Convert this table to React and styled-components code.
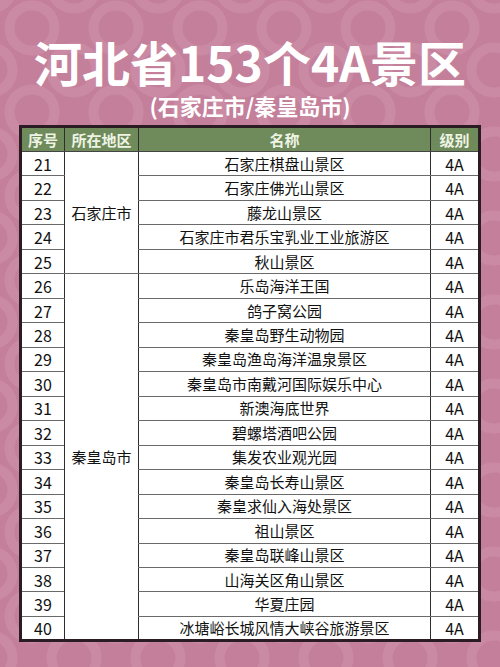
import styled, { createGlobalStyle } from 'styled-components'

const GlobalStyle = createGlobalStyle`
    html, body {
        margin:0;
        padding:0;
    }
    body {
        font-family:"Noto Sans CJK SC", "Noto Sans", sans-serif;
    }
`

const ring = `radial-gradient(circle at center, transparent 17px, rgba(255,235,245,0.1) 18px, rgba(255,235,245,0.1) 27px, transparent 28px)`

const Page = styled.div`
    width:500px;
    height:667px;
    box-sizing:border-box;
    padding-top:33px;
    background-color:#c47f9b;
    background-image:${ring}, ${ring};
    background-size:84px 84px, 84px 84px;
    background-position:-10px -14px, 32px 28px;
    display:flex;
    flex-direction:column;
    align-items:center;
    overflow:hidden;
`

const Title = styled.h1`
    margin:0;
    height:56px;
    font-size:48px;
    line-height:56px;
    font-weight:700;
    color:#fff;
`

const SubTitle = styled.h2`
    margin:4px 0 0 0;
    font-size:22px;
    line-height:24px;
    font-weight:700;
    color:#fff;
`

const Table = styled.table`
    margin-top:8px;
    width:459px;
    border-collapse:collapse;
    border:3px solid #2a1c22;
    background:#fff;
    table-layout:fixed;
`

const HeadCell = styled.th`
    height:23px;
    padding:0;
    background:#6f8a5b;
    color:#eef4e4;
    font-size:15px;
    font-weight:700;
    line-height:23px;
    text-align:center;
    border-left:1.5px solid #2e2e2e;
    border-bottom:1px solid #444;
    width:${props => props.w}px;
`

const Cell = styled.td`
    height:24.47px;
    padding:0;
    box-sizing:border-box;
    color:#111;
    font-size:${props => props.num ? 16 : 15}px;
    line-height:20px;
    text-align:center;
    border-left:1.5px solid #2e2e2e;
    border-bottom:1px solid #6a6a6a;
    white-space:nowrap;
`

const rows = [
    [21, '石家庄棋盘山景区'],
    [22, '石家庄佛光山景区'],
    [23, '藤龙山景区'],
    [24, '石家庄市君乐宝乳业工业旅游区'],
    [25, '秋山景区'],
    [26, '乐岛海洋王国'],
    [27, '鸽子窝公园'],
    [28, '秦皇岛野生动物园'],
    [29, '秦皇岛渔岛海洋温泉景区'],
    [30, '秦皇岛市南戴河国际娱乐中心'],
    [31, '新澳海底世界'],
    [32, '碧螺塔酒吧公园'],
    [33, '集发农业观光园'],
    [34, '秦皇岛长寿山景区'],
    [35, '秦皇求仙入海处景区'],
    [36, '祖山景区'],
    [37, '秦皇岛联峰山景区'],
    [38, '山海关区角山景区'],
    [39, '华夏庄园'],
    [40, '冰塘峪长城风情大峡谷旅游景区'],
]

const App = () => {
    return (
        <Page>
            <GlobalStyle/>
            <Title>河北省153个4A景区</Title>
            <SubTitle>(石家庄市/秦皇岛市)</SubTitle>
            <Table>
                <thead>
                    <tr>
                        <HeadCell w={42}>序号</HeadCell>
                        <HeadCell w={73}>所在地区</HeadCell>
                        <HeadCell w={291}>名称</HeadCell>
                        <HeadCell w={47}>级别</HeadCell>
                    </tr>
                </thead>
                <tbody>
                    {rows.map(([no, name]) => (
                        <tr key={no}>
                            <Cell num>{no}</Cell>
                            {no === 21 && <Cell rowSpan={5}>石家庄市</Cell>}
                            {no === 26 && <Cell rowSpan={15}>秦皇岛市</Cell>}
                            <Cell>{name}</Cell>
                            <Cell num>4A</Cell>
                        </tr>
                    ))}
                </tbody>
            </Table>
        </Page>
    )
}

export default App
